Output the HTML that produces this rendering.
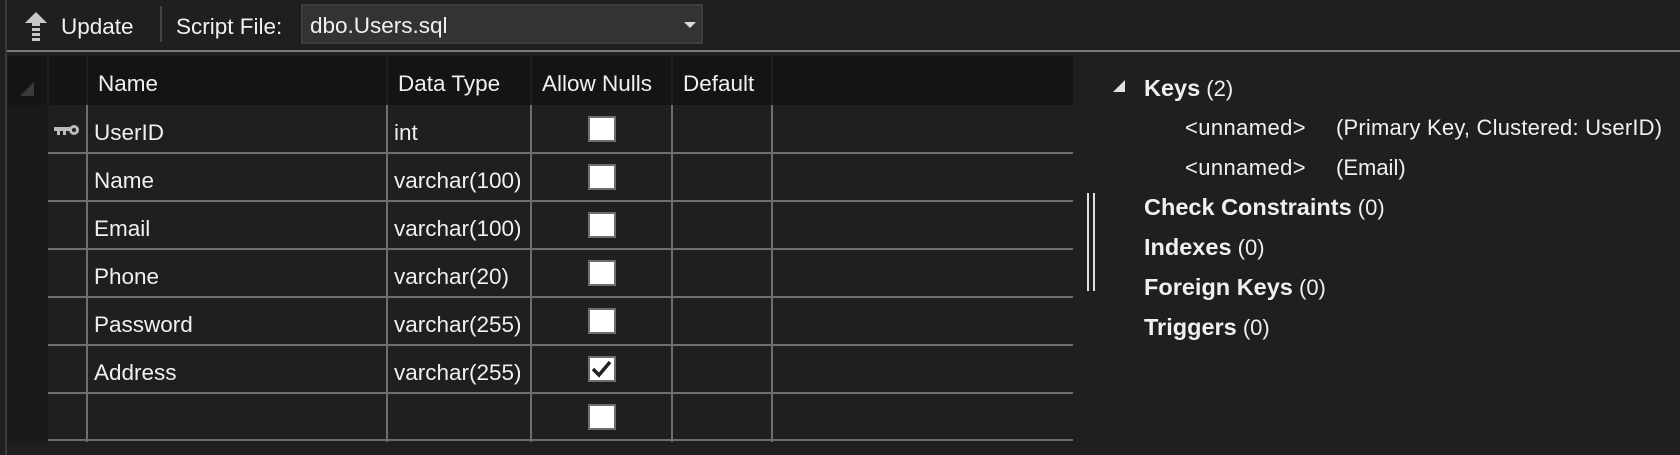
<!DOCTYPE html>
<html><head><meta charset="utf-8"><style>
*{margin:0;padding:0;box-sizing:border-box}
body{width:1680px;height:455px;background:#1f1f1f;font-family:"Liberation Sans",sans-serif;color:#f0f0f0;font-size:22.5px;position:relative;overflow:hidden}
.a{position:absolute;white-space:nowrap}
.hl{position:absolute;height:2px;background:#6e6e6e;left:48px;width:1025px}
.vl{position:absolute;width:2px;background:#6e6e6e;top:105px;height:337px}
.cb{position:absolute;width:28px;height:26px;background:#fff;border:2px solid #6e6e6e;left:588px}
.t{position:absolute;line-height:48px;height:48px;padding-top:4px}
.r{position:absolute;white-space:nowrap;font-size:22px}
b{font-weight:bold;font-size:23.5px}
</style></head><body>
<div class="a" style="left:5px;top:0;width:2px;height:455px;background:#3a3a3a"></div>
<svg class="a" style="left:24px;top:11px" width="24" height="30" viewBox="0 0 24 30"><path d="M12 1 L23 12 L16 12 L16 15 L8 15 L8 12 L1 12 Z" fill="#c8c8c8"/><rect x="8" y="17" width="8" height="3" fill="#c8c8c8"/><rect x="8" y="22" width="8" height="3" fill="#c8c8c8"/><rect x="8" y="27" width="8" height="3" fill="#c8c8c8"/></svg>
<div class="a" style="left:61px;top:14px;font-size:22.5px">Update</div>
<div class="a" style="left:160px;top:6px;width:2px;height:36px;background:#444"></div>
<div class="a" style="left:176px;top:14px;font-size:22.5px">Script File:</div>
<div class="a" style="left:301px;top:4px;width:402px;height:40px;background:#333;border:2px solid #3e3e3e"></div>
<div class="a" style="left:310px;top:13px;font-size:22.5px">dbo.Users.sql</div>
<div class="a" style="left:684px;top:22px;width:0;height:0;border-left:6px solid transparent;border-right:6px solid transparent;border-top:6px solid #ddd"></div>
<div class="a" style="left:7px;top:50px;width:1673px;height:2px;background:#7a7a7a"></div>
<div class="a" style="left:8px;top:56px;width:1065px;height:49px;background:#141414"></div>
<div class="a" style="left:8px;top:105px;width:40px;height:336px;background:#191919"></div>
<div class="a" style="left:20px;top:82px;width:0;height:0;border-left:14px solid transparent;border-bottom:14px solid #3a3a3a"></div>
<div class="a" style="left:47px;top:56px;width:2px;height:49px;background:#1f1f1f"></div>
<div class="a" style="left:86px;top:56px;width:2px;height:49px;background:#1f1f1f"></div>
<div class="a" style="left:386px;top:56px;width:2px;height:49px;background:#1f1f1f"></div>
<div class="a" style="left:530px;top:56px;width:2px;height:49px;background:#1f1f1f"></div>
<div class="a" style="left:671px;top:56px;width:2px;height:49px;background:#1f1f1f"></div>
<div class="a" style="left:771px;top:56px;width:2px;height:49px;background:#1f1f1f"></div>
<div class="t" style="left:98px;top:56px">Name</div>
<div class="t" style="left:398px;top:56px">Data Type</div>
<div class="t" style="left:542px;top:56px">Allow Nulls</div>
<div class="t" style="left:683px;top:56px">Default</div>
<div class="hl" style="top:152px"></div>
<div class="hl" style="top:200px"></div>
<div class="hl" style="top:248px"></div>
<div class="hl" style="top:296px"></div>
<div class="hl" style="top:344px"></div>
<div class="hl" style="top:392px"></div>
<div class="hl" style="top:439px"></div>
<div class="vl" style="left:86px"></div>
<div class="vl" style="left:386px"></div>
<div class="vl" style="left:530px"></div>
<div class="vl" style="left:671px"></div>
<div class="vl" style="left:771px"></div>
<svg class="a" style="left:54px;top:124px" width="26" height="14" viewBox="0 0 26 14"><rect x="0" y="3" width="16" height="4" fill="#bbb"/><rect x="3" y="6" width="3" height="5" fill="#bbb"/><rect x="9" y="6" width="3" height="5" fill="#bbb"/><circle cx="20" cy="6" r="5" fill="#bbb"/><circle cx="20" cy="6" r="2" fill="#222"/></svg>
<div class="t" style="left:94px;top:105px">UserID</div><div class="t" style="left:394px;top:105px">int</div>
<div class="t" style="left:94px;top:153px">Name</div><div class="t" style="left:394px;top:153px">varchar(100)</div>
<div class="t" style="left:94px;top:201px">Email</div><div class="t" style="left:394px;top:201px">varchar(100)</div>
<div class="t" style="left:94px;top:249px">Phone</div><div class="t" style="left:394px;top:249px">varchar(20)</div>
<div class="t" style="left:94px;top:297px">Password</div><div class="t" style="left:394px;top:297px">varchar(255)</div>
<div class="t" style="left:94px;top:345px">Address</div><div class="t" style="left:394px;top:345px">varchar(255)</div>
<div class="cb" style="top:116px"></div>
<div class="cb" style="top:164px"></div>
<div class="cb" style="top:212px"></div>
<div class="cb" style="top:260px"></div>
<div class="cb" style="top:308px"></div>
<div class="cb" style="top:356px"><svg width="24" height="22" viewBox="0 0 24 22"><path d="M3 11 L9 17 L20 4" stroke="#222" stroke-width="3.5" fill="none"/></svg></div>
<div class="cb" style="top:404px"></div>
<div class="a" style="left:1087px;top:193px;width:2px;height:98px;background:#e0e0e0"></div>
<div class="a" style="left:1093px;top:193px;width:2px;height:98px;background:#e0e0e0"></div>
<div class="a" style="left:1113px;top:80px;width:0;height:0;border-left:12px solid transparent;border-bottom:12px solid #e0e0e0"></div>
<div class="r" style="left:1144px;top:75px"><b>Keys</b> (2)</div>
<div class="r" style="left:1185px;top:115px;letter-spacing:0.4px">&lt;unnamed&gt;</div>
<div class="r" style="left:1336px;top:115px;letter-spacing:0.2px">(Primary Key, Clustered: UserID)</div>
<div class="r" style="left:1185px;top:155px;letter-spacing:0.4px">&lt;unnamed&gt;</div>
<div class="r" style="left:1336px;top:155px">(Email)</div>
<div class="r" style="left:1144px;top:194px"><b>Check Constraints</b> (0)</div>
<div class="r" style="left:1144px;top:234px"><b>Indexes</b> (0)</div>
<div class="r" style="left:1144px;top:274px"><b>Foreign Keys</b> (0)</div>
<div class="r" style="left:1144px;top:314px"><b>Triggers</b> (0)</div>
</body></html>
